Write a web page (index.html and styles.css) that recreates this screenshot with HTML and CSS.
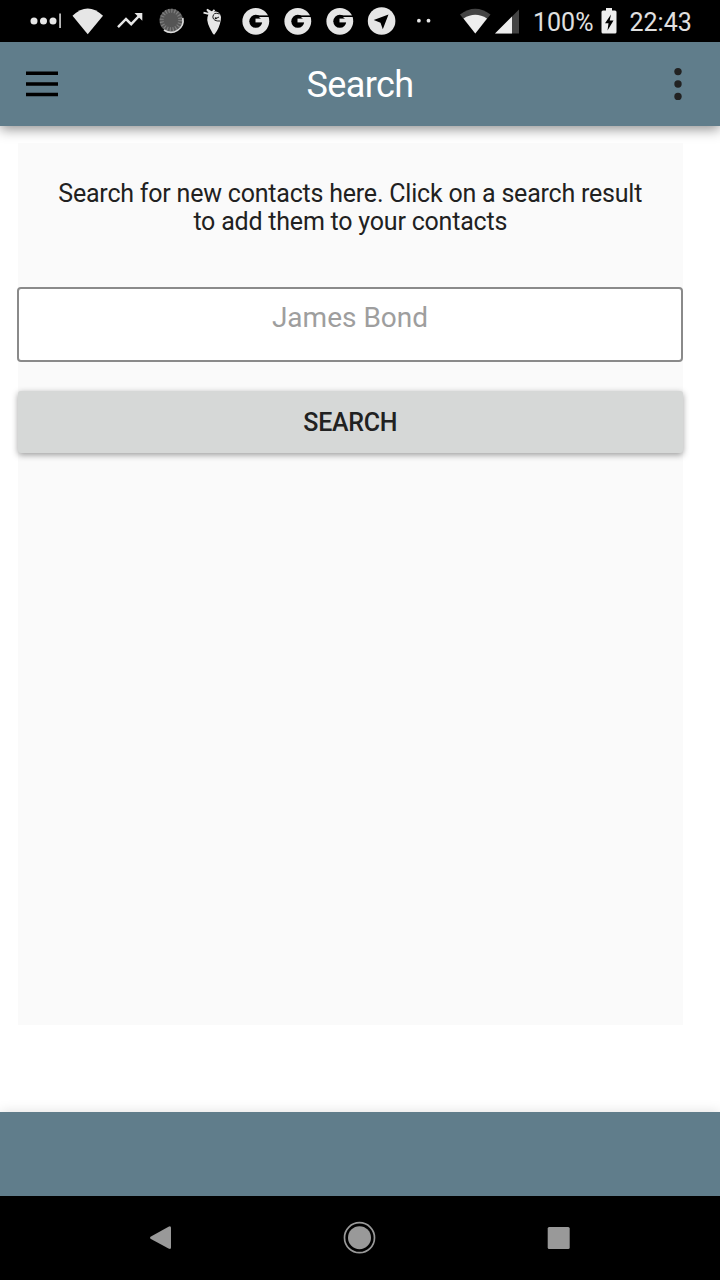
FILE: index.html
```
<!DOCTYPE html>
<html lang="en">
<head>
<meta charset="utf-8">
<title>Search</title>
<link rel="stylesheet" href="styles.css">
</head>
<body>
<svg class="defs" width="0" height="0">
  <symbol id="g" viewBox="0 0 42 42">
    <circle cx="20.800" cy="21.300" r="13.400" fill="#e6e6e6"/>
    <circle cx="20.800" cy="21.300" r="6.500" fill="#000"/>
    <path d="M22 15.400H36V17.200H22Z" fill="#000"/>
    <path d="M20.500 18.600H33.900V22.400H20.500Z" fill="#e6e6e6"/>
    <path d="M24 17H33.500V19H26Z" fill="#e6e6e6"/>
  </symbol>
</svg>
<div class="screen">
  <div class="status">
    <div class="notifications">
      <svg viewBox="0 0 42 42"><g fill="#e6e6e6"><circle cx="9" cy="21" r="3.500"/><circle cx="18.500" cy="21" r="3.500"/><circle cx="28" cy="21" r="3.500"/><path d="M34.300 13.500h1.500V28h-1.500z"/></g></svg>
      <svg viewBox="0 0 42 42"><path d="M5.500 15.800Q20.700 1 36 15.800L20.700 34.300Z" fill="#e6e6e6"/></svg>
      <svg viewBox="0 0 42 42"><path d="M9 27.200l8-8.200 5.200 5.200L30.500 15.500" fill="none" stroke="#e6e6e6" stroke-width="2.500"/><path d="M25.500 13h7.800v7.800Z" fill="#e6e6e6"/></svg>
      <svg viewBox="0 0 42 42"><circle cx="20.300" cy="20.500" r="11.800" fill="#555"/><circle cx="20" cy="20" r="9.300" fill="none" stroke="#808080" stroke-width="4" stroke-dasharray="1.200 1.720"/><path d="M31.800 18A12 12 0 0 1 13 30" fill="none" stroke="#ddd" stroke-width="1.700"/></svg>
      <svg viewBox="0 0 42 42"><path d="M14.500 17Q16 11 23 11.500Q29 13 27.800 20Q26.500 28 21.500 34.500Q20.500 35 19.500 33Q13 22 14.500 17Z" fill="#e6e6e6"/><path d="M10.500 12.700L18 14.500L14 9.500L19 12.500L21.500 9.800" fill="none" stroke="#e6e6e6" stroke-width="1.800"/><path d="M26.500 14Q20.500 11.500 19.800 17Q20.500 21.500 27 21M26 17l-3 1.500" fill="none" stroke="#222" stroke-width="1"/><circle cx="22.700" cy="18.300" r="1" fill="#111"/></svg>
      <svg><use href="#g"/></svg>
      <svg><use href="#g"/></svg>
      <svg><use href="#g"/></svg>
      <svg viewBox="0 0 42 42"><circle cx="20.600" cy="21" r="13.800" fill="#e6e6e6"/><path d="M12.700 20L27.500 14.500L21.800 29.200L19.500 22.800Z" fill="#000"/></svg>
      <svg viewBox="0 0 42 42"><circle cx="15.900" cy="20.700" r="1.900" fill="#e6e6e6"/><circle cx="25.500" cy="20.700" r="1.900" fill="#e6e6e6"/></svg>
    </div>
    <svg class="signals" viewBox="0 0 70 42"><path d="M5 14.500Q20.300 3 35.500 14.500L20.300 33.500Z" fill="#444"/><path d="M8.500 18.500Q20.300 11 32 18.500L20.300 33.500Z" fill="#eee"/><path d="M40 33.500L64 9.500V33.500Z" fill="#444"/><path d="M40 33.500L57 16.500V33.500Z" fill="#eee"/></svg>
    <span class="percent">100%</span>
    <svg class="battery" viewBox="0 0 16 26"><path d="M5 0h6v2.500h3Q15.500 2.500 15.500 4V24Q15.500 25.500 14 25.500H2Q.5 25.500 .5 24V4Q.5 2.500 2 2.500H5Z" fill="#eee"/><path d="M10 6.500L4 15.300H7.500L6.500 22.500L12.500 12.500H8.700Z" fill="#000"/></svg>
    <span class="clock">22:43</span>
  </div>
  <header class="appbar">
    <svg class="menu" viewBox="0 0 32 26"><path d="M0 2.200h32M0 13h32M0 23.500h32" stroke="#000" stroke-width="3.400"/></svg>
    <h1 class="title">Search</h1>
    <svg class="more" viewBox="0 0 8 34"><g fill="#222"><circle cx="4" cy="4.600" r="3.700"/><circle cx="4" cy="17" r="3.700"/><circle cx="4" cy="29.400" r="3.700"/></g></svg>
  </header>
  <main class="content">
    <section class="panel">
      <p class="hint">Search for new contacts here. Click on a search result<br>to add them to your contacts</p>
      <input class="field" type="text" placeholder="James Bond">
      <button class="submit">SEARCH</button>
    </section>
  </main>
  <footer class="bottombar"></footer>
  <nav class="nav">
    <svg viewBox="0 0 34 34"><path d="M7.500 15.800L25.500 5.700Q28 4.500 28 6.800V26.600Q28 28.800 25.500 27.500L7.500 17.800Q6.500 16.800 7.500 15.800Z" fill="#999"/></svg>
    <svg viewBox="0 0 34 34"><circle cx="17.500" cy="16.700" r="11.500" fill="#999"/><circle cx="17.500" cy="16.700" r="15" fill="none" stroke="#999" stroke-width="1.700"/></svg>
    <svg viewBox="0 0 34 34"><rect x="6.700" y="6" width="22" height="22" rx="1.500" fill="#999"/></svg>
  </nav>
</div>
</body>
</html>
```
FILE: styles.css
```
* { box-sizing: border-box; }
body { margin: 0; background: #fff; font-family: Roboto, "Liberation Sans", sans-serif; color: #212121; }
.defs { position: absolute; }
.screen { display: flex; flex-direction: column; width: 720px; height: 1280px; overflow: hidden; }
.status { display: flex; align-items: center; height: 42px; flex: none; padding-left: 25px; background: #000; color: #e0e0e0; font-size: 25px; line-height: 42px; white-space: nowrap; }
.notifications { display: flex; width: 430px; }
.notifications svg { width: 42px; height: 42px; flex: none; }
.signals { width: 70px; height: 42px; }
.percent { width: 75px; padding: 2px 0 0 8px; }
.battery { width: 16px; height: 26px; margin-left: .5px; }
.percent, .clock { height: 42px; }
.clock { padding: 2px 0 0 13px; }
.appbar { display: flex; align-items: center; justify-content: space-between; flex: none; height: 84px; padding: 0 38px 0 26px; background: #607d8b; box-shadow: 0 3px 12px rgba(0, 0, 0, .45); }
.menu { width: 32px; height: 26px; }
.more { width: 8px; height: 34px; }
.title { margin: 0 0 0 -12px; padding-top: 2px; color: #fff; font-size: 36px; font-weight: 400; line-height: 42px; letter-spacing: -.6px; }
.content { flex: 1; padding: 17px 37px 87px 17.5px; }
.panel { display: flex; flex-direction: column; height: 100%; background: #fafafa; }
.hint { height: 144px; margin: 0; padding-top: 37px; text-align: center; font-size: 25px; line-height: 28px; letter-spacing: -.21px; white-space: nowrap; }
.field { height: 75px; margin: 0 0 29px -.5px; padding: 0 0 14px; border: 2px solid #8a8a8a; border-radius: 4px; background: #fff; text-align: center; font: 28px Roboto, sans-serif; }
.field::placeholder { color: #9e9e9e; opacity: 1; }
.submit { height: 62px; margin: 0 .5px; padding: 0; border: 0; border-radius: 3px; background: #d6d8d7; box-shadow: 0 2px 6px rgba(0, 0, 0, .38); color: #212121; font: 500 25px Roboto, sans-serif; letter-spacing: -.3px; }
.bottombar { flex: none; height: 84px; background: #607d8b; box-shadow: 0 0 12px rgba(0, 0, 0, .13); }
.nav { display: flex; justify-content: space-between; flex: none; height: 84px; padding: 25px 145px 25px 143px; background: #000; position: relative; }
.nav svg { width: 34px; height: 34px; }
```
